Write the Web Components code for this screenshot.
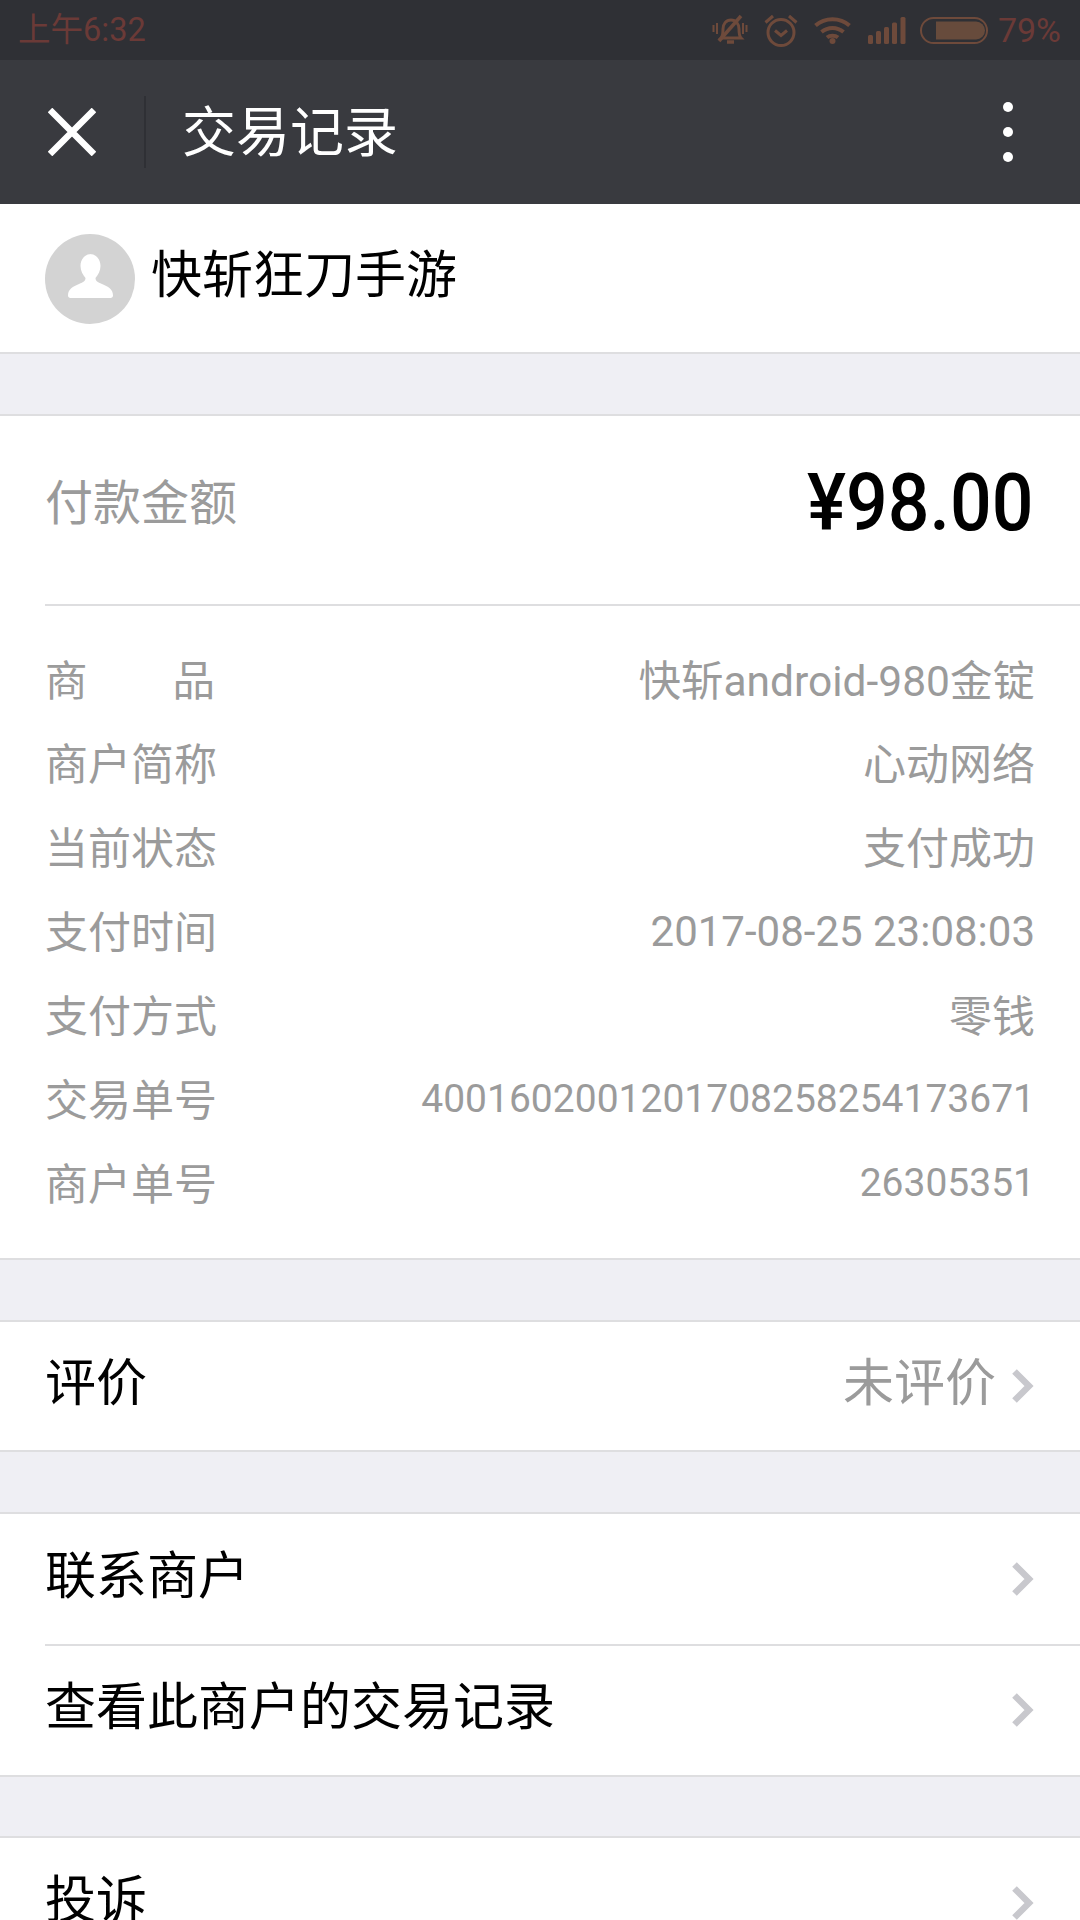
<!DOCTYPE html>
<html lang="zh">
<head>
<meta charset="utf-8">
<title>交易记录</title>
<style>
  html, body { margin: 0; padding: 0; height: 1920px; overflow: hidden; background: #efeff4; }
  body { font-family: Roboto, "Noto Sans CJK SC", sans-serif; }
</style>
</head>
<body>
<status-bar></status-bar>
<title-bar>交易记录</title-bar>
<merchant-head>快斩狂刀手游</merchant-head>

<pay-section>
  <amount-row label="付款金额" value="¥98.00"></amount-row>
  <div style="height:32px"></div>
  <detail-row label="商　　品" value="快斩android-980金锭" style="--v:42.5px;--l:42.5px"></detail-row>
  <detail-row label="商户简称" value="心动网络"></detail-row>
  <detail-row label="当前状态" value="支付成功"></detail-row>
  <detail-row label="支付时间" value="2017-08-25 23:08:03" style="--v:42px;--t:4px"></detail-row>
  <detail-row label="支付方式" value="零钱"></detail-row>
  <detail-row label="交易单号" value="4001602001201708258254173671" style="--v:39px;--t:4px"></detail-row>
  <detail-row label="商户单号" value="26305351" style="--v:39px;--t:4px"></detail-row>
  <div style="height:32px"></div>
</pay-section>

<pay-section>
  <link-row value="未评价" style="--h:128px">评价</link-row>
</pay-section>

<pay-section>
  <link-row>联系商户</link-row>
  <link-row inset style="--h:131px">查看此商户的交易记录</link-row>
</pay-section>

<pay-section style="margin-top:59px">
  <link-row>投诉</link-row>
</pay-section>

<script>
function define(name, html, setup) {
  customElements.define(name, class extends HTMLElement {
    connectedCallback() {
      if (this.shadowRoot) return;
      this.attachShadow({ mode: 'open' });
      this.shadowRoot.innerHTML = html;
      if (setup) setup(this, this.shadowRoot);
    }
  });
}

// label / value rows read their two texts from attributes
function fillTexts(el, root) {
  root.querySelector('.label').textContent = el.getAttribute('label');
  root.querySelector('.value').textContent = el.getAttribute('value');
}

define('status-bar', `
  <style>
    :host { display: flex; align-items: center; justify-content: space-between; height: 60px; box-sizing: border-box; padding: 0 19px 0 18px; background: #2f3035; }
    .time, .pct { color: #6b3a37; line-height: 60px; }
    .time { font-size: 32.5px; }
    .pct { font-size: 34px; margin-left: 10px; }
    .icons { display: flex; align-items: center; }
    svg { display: block; flex: none; }
  </style>
  <span class="time">上午6:32</span>
  <div class="icons">
    <svg width="36" height="32" viewBox="0 0 36 32" fill="none" stroke="#6e4a3b" stroke-width="3" style="margin-right:16px">
      <path d="M9 24c2-2 2-5 2-9 0-5 3-9 8-9s8 4 8 9c0 4 0 7 2 9z"/>
      <path d="M15 28h7" stroke-width="3.5"/>
      <path d="M29 2L7 27" stroke-width="3.5"/>
      <path d="M1.5 11v7M5 9v11M31 9v11M34.5 11v7" stroke-width="2"/>
    </svg>
    <svg width="34" height="33" viewBox="0 0 34 33" fill="none" stroke="#6e4a3b" stroke-width="3" style="margin-right:16px">
      <circle cx="17" cy="18.5" r="13"/>
      <path d="M11 16.5l6 5 6-5"/>
      <path d="M1.5 8.5L9 2M32.5 8.5L25 2"/>
    </svg>
    <svg width="37" height="28" viewBox="0 0 37 28" fill="none" stroke="#6e4a3b" stroke-width="4" style="margin-right:17px">
      <path d="M1.5 9.5C11 1 26 1 35.5 9.5"/>
      <path d="M7.5 16C14 10.5 23 10.5 29.5 16"/>
      <path d="M13 21.5c3-2.5 8-2.5 11 0"/>
      <circle cx="18.5" cy="25" r="3" fill="#6e4a3b" stroke="none"/>
    </svg>
    <svg width="38" height="27" viewBox="0 0 38 27" fill="#6e4a3b" style="margin-right:14px">
      <rect x="0" y="18" width="5" height="9" rx="1.5"/>
      <rect x="8" y="14" width="5" height="13" rx="1.5"/>
      <rect x="16" y="10" width="5" height="17" rx="1.5"/>
      <rect x="24" y="5.5" width="5" height="21.5" rx="1.5"/>
      <rect x="32.5" y="0" width="5" height="27" rx="1.5"/>
    </svg>
    <svg width="68" height="27" viewBox="0 0 68 27">
      <rect x="1" y="1" width="66" height="25" rx="12.5" fill="none" stroke="#6e4a3b" stroke-width="2"/>
      <path d="M16 4.5h40a9 9 0 0 1 0 18H16z" fill="#674b3c"/>
    </svg>
    <span class="pct">79%</span>
  </div>
`);

define('title-bar', `
  <style>
    :host { display: flex; align-items: center; height: 144px; background: #393a3f; color: #fff; font-size: 54px; }
    .close { width: 144px; display: flex; justify-content: center; }
    .divider { width: 2px; height: 72px; background: #2f3035; margin-right: 36px; }
    .name { flex: 1; line-height: 1; padding-top: 4px; }
    .more { display: flex; flex-direction: column; gap: 15px; padding-right: 67px; }
    .more i { display: block; width: 10px; height: 10px; border-radius: 50%; background: #fff; }
    svg { display: block; }
  </style>
  <div class="close">
    <svg width="48" height="48" viewBox="0 0 48 48" stroke="#fff" stroke-width="6.5" fill="none"><path d="M2 2l44 44M46 2L2 46"/></svg>
  </div>
  <div class="divider"></div>
  <div class="name"><slot></slot></div>
  <div class="more"><i></i><i></i><i></i></div>
`);

define('merchant-head', `
  <style>
    :host { display: flex; align-items: center; height: 150px; box-sizing: border-box; padding-left: 45px; background: #fff; border-bottom: 2px solid #dedee0; color: #000; font-size: 51px; }
    svg { display: block; margin: 2px 16px 0 0; flex: none; }
    span { margin-bottom: 14px; }
  </style>
  <svg width="90" height="90" viewBox="0 0 90 90">
    <circle cx="45" cy="45" r="45" fill="#d3d3d3"/>
    <path d="M45 20c6 0 10.5 5 10.5 12 0 5-2.5 9-5 12 0 3 2 4 6.5 6 6 2.5 11 5 11 11.500 0 1.500-1 2.500-2.500 2.500H25.500c-1.500 0-2.500-1-2.500-2.500 0-6.500 5-9 11-11.500 4.500-2 6.500-3 6.500-6-2.500-3-5-7-5-12 0-7 4.500-12 10.500-12z" fill="#fff"/>
  </svg>
  <span><slot></slot></span>
`);

define('pay-section', `
  <style>
    :host { display: block; margin-top: 60px; background: #fff; border-top: 2px solid #dedee0; border-bottom: 2px solid #dedee0; }
  </style>
  <slot></slot>
`);

define('amount-row', `
  <style>
    :host { display: flex; align-items: center; justify-content: space-between; height: 188px; margin-left: 45px; padding-right: 46px; border-bottom: 2px solid #dedee0; }
    .label { color: #9b9b9b; font-size: 48px; position: relative; top: -11px; }
    .value { display: inline-block; color: #000; font-size: 79px; font-weight: 500; position: relative; top: -7px; transform: scaleX(0.93); transform-origin: right center; }
  </style>
  <span class="label"></span><span class="value"></span>
`, fillTexts);

define('detail-row', `
  <style>
    :host { display: flex; align-items: center; justify-content: space-between; height: 84px; box-sizing: border-box; padding: 0 45px 6px; color: #9b9b9b; font-size: 43px; }
    .label { font-size: var(--l, 43px); }
    .value { font-size: var(--v, 43px); padding-top: var(--t, 0); }
  </style>
  <span class="label"></span><span class="value"></span>
`, fillTexts);

define('link-row', `
  <style>
    :host { display: flex; align-items: center; height: var(--h, 130px); position: relative; padding: 0 46px 0 45px; color: #000; font-size: 51px; }
    :host([inset])::before { content: ""; position: absolute; left: 45px; right: 0; top: 0; height: 2px; background: #dedee0; }
    .text { flex: 1; margin-bottom: 14px; }
    .value { color: #9b9b9b; margin: 0 16px 14px 0; }
    svg { display: block; flex: none; }
  </style>
  <span class="text"><slot></slot></span>
  <span class="value"></span>
  <svg width="22" height="34" viewBox="0 0 22 34" fill="none" stroke="#c8c8cd" stroke-width="6.5"><path d="M2.5 2.5L17 17 2.5 31.5"/></svg>
`, (el, root) => {
  root.querySelector('.value').textContent = el.getAttribute('value') || '';
});
</script>
</body>
</html>
